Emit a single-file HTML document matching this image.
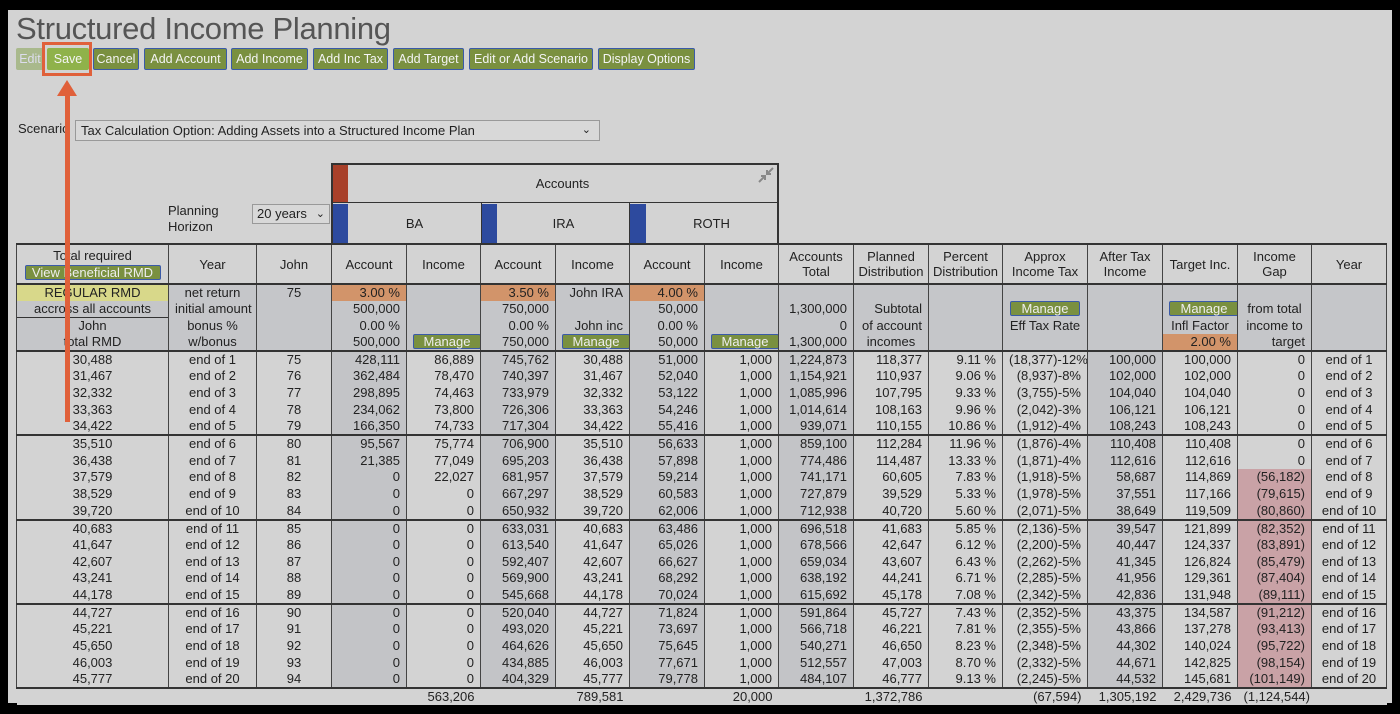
<!DOCTYPE html>
<html><head><meta charset="utf-8"><style>
*{margin:0;padding:0;box-sizing:border-box}
body{width:1400px;height:714px;background:#000;position:relative;overflow:hidden;font-family:"Liberation Sans",sans-serif;color:#222}
#pg{position:absolute;left:8px;top:10px;width:1384px;height:693px;background:#d3d3d3}
.a{position:absolute}
h1{position:absolute;left:8px;top:1px;font-weight:normal;font-size:31px;color:#555;letter-spacing:-0.3px}
.btn{position:absolute;top:38px;height:22px;background:#7a9040;border:1px solid #3a5aa8;color:#f4f4f4;font-size:12.5px;line-height:20px;text-align:center;border-radius:2px;white-space:nowrap;overflow:hidden}
.mb{display:inline-block;background:#7a9040;border:1px solid #3a5aa8;color:#eee;font-size:13px;line-height:13px;height:15px;border-radius:2px;text-align:center}
table{position:absolute;left:8px;top:233px;border-collapse:collapse;table-layout:fixed;width:1370px;font-size:13px}
td{border-left:1px solid #444;border-right:1px solid #444;white-space:nowrap;overflow:hidden;text-align:right;padding:0 6px;height:16.75px;line-height:16px}
td.c{text-align:center}
tr.h td{height:40px;border-bottom:2px solid #333;border-top:2px solid #333;text-align:center;line-height:15px;padding:0 2px}
tr.p td{height:16.4px;background:#c5c6c9}
tr.g td{border-top:2px solid #333}
tr.t td{border:none;border-top:2px solid #333;background:#d3d3d3}
.d{background:#c3c4c7}
.l{background:#d3d3d3}
.o{background:#d2946a!important}
.k{background:#c9a2a6!important}
.y{background:#d8d88a!important}
</style></head><body><div id="pg">
<h1>Structured Income Planning</h1>
<div class="btn" style="left:8px;width:28px;background:#a9b98c;border-color:#a9b98c;color:#dde">Edit</div>
<div class="btn" style="left:39px;width:42px;background:#8fb24a;border-color:#8fb24a">Save</div>
<div class="a" style="left:34px;top:32px;width:50px;height:34px;border:3px solid #e0603a"></div>
<div class="btn" style="left:85px;width:46px">Cancel</div>
<div class="btn" style="left:136px;width:83px">Add Account</div>
<div class="btn" style="left:223px;width:77px">Add Income</div>
<div class="btn" style="left:305px;width:75px">Add Inc Tax</div>
<div class="btn" style="left:385px;width:71px">Add Target</div>
<div class="btn" style="left:461px;width:124px">Edit or Add Scenario</div>
<div class="btn" style="left:590px;width:97px">Display Options</div>
<div class="a" style="left:10px;top:111px;font-size:13px">Scenario</div>
<div class="a" style="left:67px;top:110px;width:525px;height:21px;border:1px solid #999;background:#d8d8d8;font-size:13px;line-height:19px;padding-left:5px">Tax Calculation Option: Adding Assets into a Structured Income Plan<span style="position:absolute;right:8px;font-size:11px">&#8964;</span></div>
<div class="a" style="left:160px;top:193px;font-size:13px;line-height:16px">Planning<br>Horizon</div>
<div class="a" style="left:244px;top:194px;width:78px;height:20px;border:1px solid #999;background:#d8d8d8;font-size:13px;line-height:18px;padding-left:4px">20 years<span style="position:absolute;right:4px;font-size:11px">&#8964;</span></div>
<div class="a" style="left:323px;top:153px;width:448px;height:82px;border:2px solid #333;background:#d3d3d3"></div>
<div class="a" style="left:325px;top:155px;width:15px;height:38px;background:#a8402a"></div>
<div class="a" style="left:325px;top:192px;width:444px;height:1px;background:#333"></div>
<div class="a" style="left:340px;top:155px;width:429px;height:38px;text-align:center;line-height:38px;font-size:13px">Accounts</div>
<svg class="a" style="left:750px;top:157px" width="16" height="16" viewBox="0 0 16 16"><path d="M15 1 L9 7 M9 3 V7 H13 M1 15 L7 9 M3 9 H7 V13" stroke="#888" stroke-width="2" fill="none"/></svg>
<div class="a" style="left:325px;top:194px;width:15px;height:39px;background:#2d4a9e"></div>
<div class="a" style="left:340px;top:194px;width:133px;line-height:39px;text-align:center;font-size:13px">BA</div>
<div class="a" style="left:473px;top:193px;width:1px;height:40px;background:#333"></div>
<div class="a" style="left:474px;top:194px;width:15px;height:39px;background:#2d4a9e"></div>
<div class="a" style="left:489px;top:194px;width:133px;line-height:39px;text-align:center;font-size:13px">IRA</div>
<div class="a" style="left:621px;top:193px;width:1px;height:40px;background:#333"></div>
<div class="a" style="left:622px;top:194px;width:16px;height:39px;background:#2d4a9e"></div>
<div class="a" style="left:638px;top:194px;width:131px;line-height:39px;text-align:center;font-size:13px">ROTH</div>
<table>
<colgroup><col style="width:152px"><col style="width:88px"><col style="width:75px"><col style="width:75px"><col style="width:74px"><col style="width:75px"><col style="width:74px"><col style="width:75px"><col style="width:74px"><col style="width:75px"><col style="width:75px"><col style="width:74px"><col style="width:85px"><col style="width:75px"><col style="width:75px"><col style="width:74px"><col style="width:75px"></colgroup>
<tr class="h"><td class="l" style="line-height:17px">Total required<br><span class="mb" style="width:136px">View Beneficial RMD</span></td><td class="l">Year</td><td class="l">John</td><td class="l">Account</td><td class="l">Income</td><td class="l">Account</td><td class="l">Income</td><td class="l">Account</td><td class="l">Income</td><td class="l">Accounts<br>Total</td><td class="l">Planned<br>Distribution</td><td class="l">Percent<br>Distribution</td><td class="l">Approx<br>Income Tax</td><td class="l">After Tax<br>Income</td><td class="l">Target Inc.</td><td class="l">Income<br>Gap</td><td class="l">Year</td></tr>
<tr class="p"><td class="c y">REGULAR RMD</td><td class="c l">net return</td><td class="c">75</td><td class="o">3.00 %</td><td></td><td class="o">3.50 %</td><td>John IRA</td><td class="o">4.00 %</td><td></td><td></td><td></td><td></td><td></td><td></td><td></td><td></td><td></td></tr>
<tr class="p"><td class="c l">accross all accounts</td><td class="c l">initial amount</td><td></td><td>500,000</td><td></td><td>750,000</td><td></td><td>50,000</td><td></td><td>1,300,000</td><td>Subtotal</td><td></td><td class="c"><span class="mb" style="width:70px">Manage</span></td><td></td><td class="c"><span class="mb" style="width:70px">Manage</span></td><td class="c">from total</td><td></td></tr>
<tr class="p"><td class="c l" style="border-top:1px solid #333">John</td><td class="c l">bonus %</td><td></td><td>0.00 %</td><td></td><td>0.00 %</td><td>John inc</td><td>0.00 %</td><td></td><td>0</td><td>of account</td><td></td><td class="c">Eff Tax Rate</td><td></td><td class="c">Infl Factor</td><td class="c">income to</td><td></td></tr>
<tr class="p"><td class="c l">total RMD</td><td class="c l">w/bonus</td><td></td><td>500,000</td><td class="c"><span class="mb" style="width:68px">Manage</span></td><td>750,000</td><td class="c"><span class="mb" style="width:68px">Manage</span></td><td>50,000</td><td class="c"><span class="mb" style="width:68px">Manage</span></td><td>1,300,000</td><td class="c">incomes</td><td></td><td></td><td></td><td class="o">2.00 %</td><td>target</td><td></td></tr>
<tr class="g"><td class="c l">30,488</td><td class="c l">end of 1</td><td class="c l">75</td><td class="d">428,111</td><td class="l">86,889</td><td class="d">745,762</td><td class="l">30,488</td><td class="d">51,000</td><td class="l">1,000</td><td class="d">1,224,873</td><td class="l">118,377</td><td class="l">9.11 %</td><td class="l">(18,377)-12%</td><td class="d">100,000</td><td class="l">100,000</td><td class="l">0</td><td class="c l">end of 1</td></tr>
<tr><td class="c l">31,467</td><td class="c l">end of 2</td><td class="c l">76</td><td class="d">362,484</td><td class="l">78,470</td><td class="d">740,397</td><td class="l">31,467</td><td class="d">52,040</td><td class="l">1,000</td><td class="d">1,154,921</td><td class="l">110,937</td><td class="l">9.06 %</td><td class="l">(8,937)-8%</td><td class="d">102,000</td><td class="l">102,000</td><td class="l">0</td><td class="c l">end of 2</td></tr>
<tr><td class="c l">32,332</td><td class="c l">end of 3</td><td class="c l">77</td><td class="d">298,895</td><td class="l">74,463</td><td class="d">733,979</td><td class="l">32,332</td><td class="d">53,122</td><td class="l">1,000</td><td class="d">1,085,996</td><td class="l">107,795</td><td class="l">9.33 %</td><td class="l">(3,755)-5%</td><td class="d">104,040</td><td class="l">104,040</td><td class="l">0</td><td class="c l">end of 3</td></tr>
<tr><td class="c l">33,363</td><td class="c l">end of 4</td><td class="c l">78</td><td class="d">234,062</td><td class="l">73,800</td><td class="d">726,306</td><td class="l">33,363</td><td class="d">54,246</td><td class="l">1,000</td><td class="d">1,014,614</td><td class="l">108,163</td><td class="l">9.96 %</td><td class="l">(2,042)-3%</td><td class="d">106,121</td><td class="l">106,121</td><td class="l">0</td><td class="c l">end of 4</td></tr>
<tr><td class="c l">34,422</td><td class="c l">end of 5</td><td class="c l">79</td><td class="d">166,350</td><td class="l">74,733</td><td class="d">717,304</td><td class="l">34,422</td><td class="d">55,416</td><td class="l">1,000</td><td class="d">939,071</td><td class="l">110,155</td><td class="l">10.86 %</td><td class="l">(1,912)-4%</td><td class="d">108,243</td><td class="l">108,243</td><td class="l">0</td><td class="c l">end of 5</td></tr>
<tr class="g"><td class="c l">35,510</td><td class="c l">end of 6</td><td class="c l">80</td><td class="d">95,567</td><td class="l">75,774</td><td class="d">706,900</td><td class="l">35,510</td><td class="d">56,633</td><td class="l">1,000</td><td class="d">859,100</td><td class="l">112,284</td><td class="l">11.96 %</td><td class="l">(1,876)-4%</td><td class="d">110,408</td><td class="l">110,408</td><td class="l">0</td><td class="c l">end of 6</td></tr>
<tr><td class="c l">36,438</td><td class="c l">end of 7</td><td class="c l">81</td><td class="d">21,385</td><td class="l">77,049</td><td class="d">695,203</td><td class="l">36,438</td><td class="d">57,898</td><td class="l">1,000</td><td class="d">774,486</td><td class="l">114,487</td><td class="l">13.33 %</td><td class="l">(1,871)-4%</td><td class="d">112,616</td><td class="l">112,616</td><td class="l">0</td><td class="c l">end of 7</td></tr>
<tr><td class="c l">37,579</td><td class="c l">end of 8</td><td class="c l">82</td><td class="d">0</td><td class="l">22,027</td><td class="d">681,957</td><td class="l">37,579</td><td class="d">59,214</td><td class="l">1,000</td><td class="d">741,171</td><td class="l">60,605</td><td class="l">7.83 %</td><td class="l">(1,918)-5%</td><td class="d">58,687</td><td class="l">114,869</td><td class="k">(56,182)</td><td class="c l">end of 8</td></tr>
<tr><td class="c l">38,529</td><td class="c l">end of 9</td><td class="c l">83</td><td class="d">0</td><td class="l">0</td><td class="d">667,297</td><td class="l">38,529</td><td class="d">60,583</td><td class="l">1,000</td><td class="d">727,879</td><td class="l">39,529</td><td class="l">5.33 %</td><td class="l">(1,978)-5%</td><td class="d">37,551</td><td class="l">117,166</td><td class="k">(79,615)</td><td class="c l">end of 9</td></tr>
<tr><td class="c l">39,720</td><td class="c l">end of 10</td><td class="c l">84</td><td class="d">0</td><td class="l">0</td><td class="d">650,932</td><td class="l">39,720</td><td class="d">62,006</td><td class="l">1,000</td><td class="d">712,938</td><td class="l">40,720</td><td class="l">5.60 %</td><td class="l">(2,071)-5%</td><td class="d">38,649</td><td class="l">119,509</td><td class="k">(80,860)</td><td class="c l">end of 10</td></tr>
<tr class="g"><td class="c l">40,683</td><td class="c l">end of 11</td><td class="c l">85</td><td class="d">0</td><td class="l">0</td><td class="d">633,031</td><td class="l">40,683</td><td class="d">63,486</td><td class="l">1,000</td><td class="d">696,518</td><td class="l">41,683</td><td class="l">5.85 %</td><td class="l">(2,136)-5%</td><td class="d">39,547</td><td class="l">121,899</td><td class="k">(82,352)</td><td class="c l">end of 11</td></tr>
<tr><td class="c l">41,647</td><td class="c l">end of 12</td><td class="c l">86</td><td class="d">0</td><td class="l">0</td><td class="d">613,540</td><td class="l">41,647</td><td class="d">65,026</td><td class="l">1,000</td><td class="d">678,566</td><td class="l">42,647</td><td class="l">6.12 %</td><td class="l">(2,200)-5%</td><td class="d">40,447</td><td class="l">124,337</td><td class="k">(83,891)</td><td class="c l">end of 12</td></tr>
<tr><td class="c l">42,607</td><td class="c l">end of 13</td><td class="c l">87</td><td class="d">0</td><td class="l">0</td><td class="d">592,407</td><td class="l">42,607</td><td class="d">66,627</td><td class="l">1,000</td><td class="d">659,034</td><td class="l">43,607</td><td class="l">6.43 %</td><td class="l">(2,262)-5%</td><td class="d">41,345</td><td class="l">126,824</td><td class="k">(85,479)</td><td class="c l">end of 13</td></tr>
<tr><td class="c l">43,241</td><td class="c l">end of 14</td><td class="c l">88</td><td class="d">0</td><td class="l">0</td><td class="d">569,900</td><td class="l">43,241</td><td class="d">68,292</td><td class="l">1,000</td><td class="d">638,192</td><td class="l">44,241</td><td class="l">6.71 %</td><td class="l">(2,285)-5%</td><td class="d">41,956</td><td class="l">129,361</td><td class="k">(87,404)</td><td class="c l">end of 14</td></tr>
<tr><td class="c l">44,178</td><td class="c l">end of 15</td><td class="c l">89</td><td class="d">0</td><td class="l">0</td><td class="d">545,668</td><td class="l">44,178</td><td class="d">70,024</td><td class="l">1,000</td><td class="d">615,692</td><td class="l">45,178</td><td class="l">7.08 %</td><td class="l">(2,342)-5%</td><td class="d">42,836</td><td class="l">131,948</td><td class="k">(89,111)</td><td class="c l">end of 15</td></tr>
<tr class="g"><td class="c l">44,727</td><td class="c l">end of 16</td><td class="c l">90</td><td class="d">0</td><td class="l">0</td><td class="d">520,040</td><td class="l">44,727</td><td class="d">71,824</td><td class="l">1,000</td><td class="d">591,864</td><td class="l">45,727</td><td class="l">7.43 %</td><td class="l">(2,352)-5%</td><td class="d">43,375</td><td class="l">134,587</td><td class="k">(91,212)</td><td class="c l">end of 16</td></tr>
<tr><td class="c l">45,221</td><td class="c l">end of 17</td><td class="c l">91</td><td class="d">0</td><td class="l">0</td><td class="d">493,020</td><td class="l">45,221</td><td class="d">73,697</td><td class="l">1,000</td><td class="d">566,718</td><td class="l">46,221</td><td class="l">7.81 %</td><td class="l">(2,355)-5%</td><td class="d">43,866</td><td class="l">137,278</td><td class="k">(93,413)</td><td class="c l">end of 17</td></tr>
<tr><td class="c l">45,650</td><td class="c l">end of 18</td><td class="c l">92</td><td class="d">0</td><td class="l">0</td><td class="d">464,626</td><td class="l">45,650</td><td class="d">75,645</td><td class="l">1,000</td><td class="d">540,271</td><td class="l">46,650</td><td class="l">8.23 %</td><td class="l">(2,348)-5%</td><td class="d">44,302</td><td class="l">140,024</td><td class="k">(95,722)</td><td class="c l">end of 18</td></tr>
<tr><td class="c l">46,003</td><td class="c l">end of 19</td><td class="c l">93</td><td class="d">0</td><td class="l">0</td><td class="d">434,885</td><td class="l">46,003</td><td class="d">77,671</td><td class="l">1,000</td><td class="d">512,557</td><td class="l">47,003</td><td class="l">8.70 %</td><td class="l">(2,332)-5%</td><td class="d">44,671</td><td class="l">142,825</td><td class="k">(98,154)</td><td class="c l">end of 19</td></tr>
<tr><td class="c l">45,777</td><td class="c l">end of 20</td><td class="c l">94</td><td class="d">0</td><td class="l">0</td><td class="d">404,329</td><td class="l">45,777</td><td class="d">79,778</td><td class="l">1,000</td><td class="d">484,107</td><td class="l">46,777</td><td class="l">9.13 %</td><td class="l">(2,245)-5%</td><td class="d">44,532</td><td class="l">145,681</td><td class="k">(101,149)</td><td class="c l">end of 20</td></tr>
<tr class="t"><td></td><td></td><td></td><td></td><td>563,206</td><td></td><td>789,581</td><td></td><td>20,000</td><td></td><td>1,372,786</td><td></td><td>(67,594)</td><td>1,305,192</td><td>2,429,736</td><td>(1,124,544)</td><td></td></tr>
</table>
<div class="a" style="left:57px;top:82px;width:5px;height:330px;background:#e0603a"></div>
<div class="a" style="left:49px;top:70px;width:0;height:0;border-left:10px solid transparent;border-right:10px solid transparent;border-bottom:16px solid #e0603a"></div>
</div></body></html>
